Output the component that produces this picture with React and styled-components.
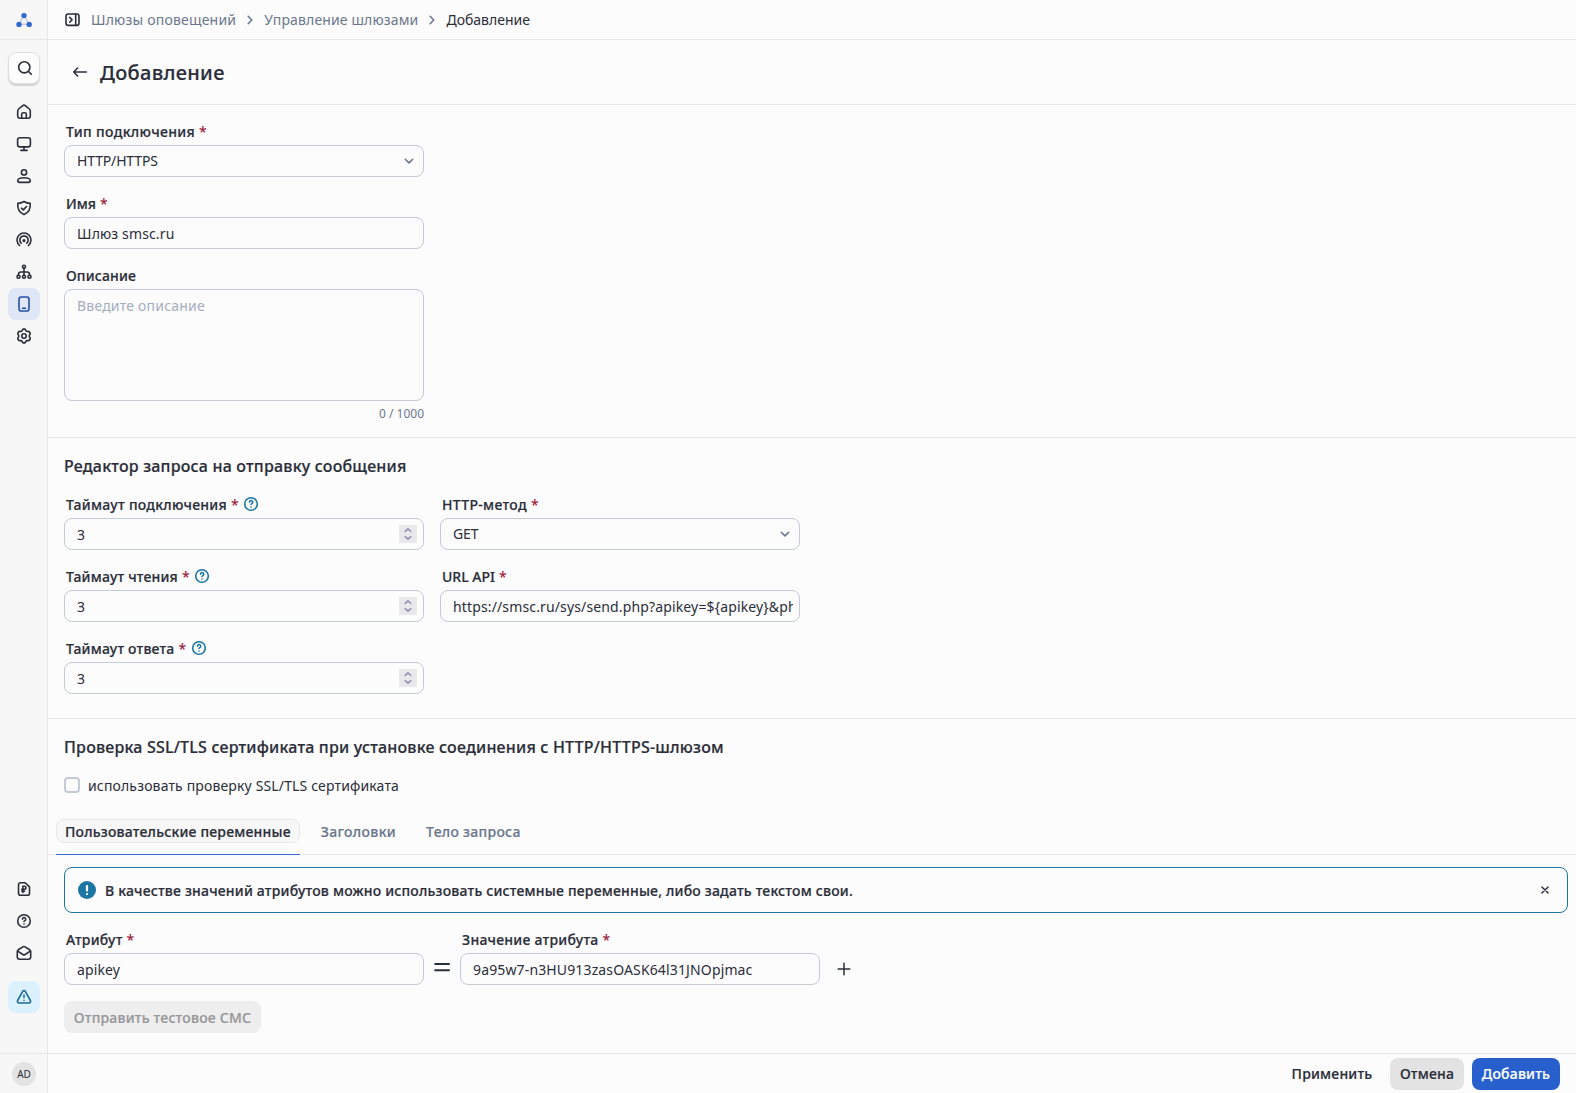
import React from "react";
import styled, { createGlobalStyle, css } from "styled-components";

const GlobalStyle = createGlobalStyle`
  * {
    box-sizing: border-box;
  }
  body {
    margin: 0;
    background: #fcfcfd;
    color: #2b2d38;
    font-family: "Noto Sans", sans-serif;
    font-size: 14px;
    line-height: 20px;
  }
  input, textarea, button {
    font: inherit;
    color: inherit;
  }
`;

const medium = css`
  font-weight: 500;
  -webkit-text-stroke: 0.2px;
`;

const Layout = styled.div`
  display: flex;
  height: 1093px;
  overflow: hidden;
`;

const Sidebar = styled.nav`
  display: flex;
  flex-direction: column;
  align-items: center;
  width: 48px;
  flex: none;
  background: #f7f7f7;
  border-right: 1px solid #e8e8ea;
`;
const LogoBox = styled.div`
  display: flex;
  align-items: center;
  justify-content: center;
  align-self: stretch;
  height: 40px;
  padding-left: 1px;
  border-bottom: 1px solid #e8e8ea;
`;
const SearchButton = styled.button`
  display: flex;
  align-items: center;
  justify-content: center;
  width: 32px;
  height: 32px;
  margin: 12px 0 12px 1px;
  padding: 0 0 0 1px;
  background: #fdfdfd;
  border: 1px solid #dededf;
  border-radius: 8px;
  box-shadow: 0 2px 1px #d4d4d4;
`;
const NavItem = styled.a`
  display: flex;
  align-items: center;
  justify-content: center;
  width: 32px;
  height: 32px;
  margin-left: 1px;
  border-radius: 8px;
  color: ${props => props.$color || "#2b2d38"};
  background: ${props => props.$bg || "transparent"};
`;
const Spacer = styled.div`
  flex: 1;
`;
const AlertSlot = styled.div`
  margin: 12px 0 40px;
`;
const UserBox = styled.div`
  display: flex;
  align-items: center;
  justify-content: center;
  align-self: stretch;
  height: 40px;
  padding-left: 1px;
  border-top: 1px solid #e8e8ea;
`;
const Avatar = styled.div`
  width: 24px;
  height: 24px;
  margin-top: 1px;
  border-radius: 50%;
  background: #e3e3e3;
  font-size: 10px;
  line-height: 25px;
  text-align: center;
`;

const Main = styled.main`
  display: flex;
  flex-direction: column;
  flex: 1;
  min-width: 0;
`;
const Breadcrumbs = styled.div`
  display: flex;
  align-items: center;
  height: 40px;
  padding-left: 16px;
  border-bottom: 1px solid #e8e8ea;
`;
const Crumb = styled.span`
  color: ${props => (props.$current ? "#2b2d38" : "#6b778c")};
  letter-spacing: ${props => props.$track || 0}px;
`;
const CrumbArrow = styled.span`
  display: flex;
  justify-content: center;
  width: 28px;
  color: #6b778c;
`;
const PanelToggle = styled.span`
  display: flex;
  width: 27px;
`;
const TitleBar = styled.header`
  display: flex;
  align-items: center;
  gap: 12px;
  height: 65px;
  padding-left: 24px;
  border-bottom: 1px solid #e8e8ea;
`;
const Title = styled.h1`
  ${medium}
  margin: 0;
  padding-top: 2px;
  font-size: 20px;
  line-height: 28px;
  letter-spacing: 0.32px;
`;

const Section = styled.section`
  padding: 16px 16px ${props => props.$bottom}px;
  border-bottom: 1px solid #e8e8ea;
`;
const Heading = styled.h2`
  ${medium}
  margin: 0 0 16px;
  font-size: 16px;
  line-height: 24px;
  letter-spacing: 0.2px;
`;
const Stack = styled.div`
  display: flex;
  flex-direction: column;
  gap: 16px;
`;
const Columns = styled.div`
  display: flex;
  align-items: flex-start;
  gap: 16px;
`;
const FieldBox = styled.div`
  width: 360px;
`;
const Label = styled.label`
  display: flex;
  align-items: center;
  height: 24px;
  padding: 0 0 2px 2px;
  line-height: 22px;
`;
const LabelText = styled.span`
  ${medium}
  letter-spacing: ${props => props.$track}px;
`;
const Star = styled.span`
  margin-left: 4px;
  color: #9d1c3b;
  font-weight: 500;
`;
const HelpSlot = styled.span`
  display: flex;
  margin: -2px 0 0 4.5px;
  color: #1b76a3;
`;
const Control = styled.div`
  display: flex;
  align-items: center;
  height: 32px;
  padding-right: 6px;
  border: 1px solid #c6cad6;
  border-radius: 8px;
`;
const Input = styled.input`
  flex: 1;
  min-width: 0;
  height: 30px;
  padding: 0;
  margin-left: 12px;
  border: 0;
  outline: 0;
  background: none;
  letter-spacing: 0.14px;
`;
const SelectValue = styled.span`
  flex: 1;
  padding-left: 12px;
  letter-spacing: -0.15px;
`;
const SelectArrow = styled.span`
  display: flex;
  color: #6b778c;
`;
const Stepper = styled.span`
  display: flex;
  align-items: center;
  justify-content: center;
  width: 18px;
  height: 18px;
  background: #e9e8ed;
  color: #9694a3;
`;
const TextArea = styled.textarea`
  display: block;
  width: 360px;
  height: 112px;
  padding: 6px 12px;
  border: 1px solid #c6cad6;
  border-radius: 8px;
  outline: 0;
  resize: none;
  background: none;
  letter-spacing: 0.2px;
  &::placeholder {
    color: #a3adbd;
  }
`;
const Counter = styled.div`
  height: 24px;
  color: #6b778c;
  font-size: 12px;
  line-height: 26px;
  text-align: right;
`;

const CheckRow = styled.label`
  display: flex;
  align-items: center;
  gap: 8px;
  height: 20px;
`;
const CheckBox = styled.span`
  width: 16px;
  height: 16px;
  border: 2px solid #c6cad6;
  border-radius: 4px;
`;
const CheckText = styled.span`
  padding-top: 2px;
  letter-spacing: 0.15px;
`;
const SslBlock = styled.section`
  padding: 16px 16px 24px;
`;
const Tabs = styled.div`
  display: flex;
  gap: 12px;
  height: 36px;
  padding-left: 8px;
  border-bottom: 1px solid #e8e8ea;
`;
const Tab = styled.div`
  ${medium}
  height: 36px;
  border-bottom: 1px solid ${props => (props.$active ? "#3568cd" : "transparent")};
  color: ${props => (props.$active ? "#2b2d38" : "#6b778c")};
`;
const TabText = styled.span`
  display: block;
  height: 24px;
  padding: 0 8px;
  border: 1px solid ${props => (props.$active ? "#e8e8ea" : "transparent")};
  border-radius: 8px;
  background: ${props => (props.$active ? "#f7f7f7" : "none")};
  line-height: 24px;
  letter-spacing: ${props => props.$track}px;
`;
const Notice = styled.div`
  display: flex;
  align-items: center;
  height: 46px;
  margin: 12px 8px 16px 16px;
  padding: 0 14px 0 13px;
  border: 1px solid #1b76a3;
  border-radius: 8px;
`;
const NoticeText = styled.span`
  ${medium}
  flex: 1;
  padding: 2px 0 0 9px;
  letter-spacing: 0.195px;
`;
const AttributeRow = styled.div`
  display: flex;
  align-items: flex-end;
  padding-left: 16px;
`;
const RowSign = styled.span`
  display: flex;
  align-items: center;
  justify-content: center;
  width: ${props => props.$width}px;
  height: 32px;
`;
const Button = styled.button`
  ${medium}
  width: ${props => props.$width}px;
  height: 32px;
  padding: ${props => props.$shift || 0}px 0 0;
  border: 0;
  border-radius: 8px;
  background: ${props => props.$bg || "transparent"};
  color: ${props => props.$color || "#2b2d38"};
  letter-spacing: 0.2px;
  white-space: nowrap;
`;
const TestRow = styled.div`
  flex: 1;
  padding: 16px 0 0 16px;
`;
const Footer = styled.footer`
  display: flex;
  justify-content: flex-end;
  gap: 8px;
  height: 40px;
  padding: 4px 16px 0 0;
  border-top: 1px solid #e8e8ea;
`;

const Icon = ({ children, size = 16, width = 1.6 }) => (
  <svg
    width={size}
    height={size}
    viewBox={`0 0 ${size} ${size}`}
    fill="none"
    stroke="currentColor"
    strokeWidth={width}
    strokeLinecap="round"
    strokeLinejoin="round"
  >
    {children}
  </svg>
);

const HelpIcon = () => (
  <Icon>
    <circle cx="8" cy="8" r="6.3" />
    <path d="M6.5 6.1a1.6 1.6 0 1 1 2.3 1.500c-.5.25-.8.5-.8.9" />
    <path d="M8 11v.1" />
  </Icon>
);

const Logo = () => (
  <svg width="16" height="16" viewBox="0 0 16 16">
    <path d="M8 3 3 12.2h10z" fill="none" stroke="#9db5ea" strokeWidth="1" />
    <circle cx="8" cy="3.6" r="2.7" fill="#3568cd" />
    <circle cx="3" cy="12.4" r="2.7" fill="#3568cd" />
    <circle cx="13.2" cy="12.4" r="2.7" fill="#3568cd" />
  </svg>
);

const topIcons = [
  <>
    <path d="M1.7 6.9c0-.8.3-1.4.9-1.9l4.1-3.400a2 2 0 0 1 2.600 0L13.400 5c.6.5.9 1.100.9 1.900v5.200a2.200 2.200 0 0 1-2.200 2.200H3.900a2.200 2.200 0 0 1-2.200-2.200z" />
    <path d="M5.700 14.200v-4a1.400 1.400 0 0 1 1.400-1.400h1.800a1.400 1.400 0 0 1 1.400 1.400v4" />
  </>,
  <>
    <rect x="1.6" y="1.7" width="12.8" height="9.2" rx="2.2" />
    <path d="M8 11v3.3M4.900 14.400h6.200" />
  </>,
  <>
    <circle cx="8" cy="4.4" r="2.6" />
    <path d="M8 9.800c-3.600 0-6.300 1.100-6.300 3 0 1 .8 1.600 1.800 1.600h9c1 0 1.800-.6 1.800-1.600 0-1.900-2.700-3-6.300-3z" />
  </>,
  <>
    <path d="M8 1.500c1.800 1.200 3.800 1.800 6.200 1.900.5 5.100-1.300 9.200-6.200 11.200-4.900-2-6.700-6.100-6.200-11.200C4.200 3.300 6.200 2.700 8 1.500z" />
    <path d="m5.500 8.200 1.800 1.700 3.200-3.400" />
  </>,
  <>
    <path d="M3.600 13.500a7 7 0 1 1 8.800 0" />
    <path d="M5.200 11.200a4.200 4.200 0 1 1 5.600 0" />
    <circle cx="8" cy="8.600" r=".8" fill="currentColor" />
  </>,
  <>
    <circle cx="8" cy="2.800" r="1.500" />
    <circle cx="2.500" cy="12.800" r="1.500" />
    <circle cx="8" cy="12.800" r="1.500" />
    <circle cx="13.500" cy="12.800" r="1.500" />
    <path d="M8 4.400v6.800M2.500 11.200v-.8C2.500 9 3.400 8 4.800 8h6.400c1.400 0 2.300 1 2.300 2.400v.8" />
  </>,
  <>
    <rect x="3" y="1" width="10" height="14" rx="2.300" />
    <path d="M6.500 12.200h3" />
  </>,
  <>
    <path d="M6.600 1.600a1 1 0 0 1 .8-.5h1.200a1 1 0 0 1 .8.5l.6 1.300 1 .6 1.500-.1a1 1 0 0 1 .9.400l.7 1.200a1 1 0 0 1 0 1l-.8 1.300v1.400l.8 1.300a1 1 0 0 1 0 1l-.7 1.200a1 1 0 0 1-.9.400l-1.500-.1-1 .6-.6 1.300a1 1 0 0 1-.8.500H7.400a1 1 0 0 1-.8-.5L6 13.100l-1-.6-1.500.1a1 1 0 0 1-.9-.4L1.900 11a1 1 0 0 1 0-1l.8-1.300V7.300L1.900 6a1 1 0 0 1 0-1l.7-1.200a1 1 0 0 1 .9-.4l1.500.1 1-.6z" />
    <circle cx="8" cy="8" r="2.200" />
  </>
];

const Field = ({ label, required, help, track = 0.15, children }) => (
  <FieldBox>
    <Label>
      <LabelText $track={track}>{label}</LabelText>
      {required && <Star>*</Star>}
      {help && (
        <HelpSlot>
          <HelpIcon />
        </HelpSlot>
      )}
    </Label>
    {children}
  </FieldBox>
);

const TextField = ({ label, value, track }) => (
  <Field label={label} track={track} required>
    <Control>
      <Input defaultValue={value} />
    </Control>
  </Field>
);

const NumberField = ({ label, value, track }) => (
  <Field label={label} track={track} required help>
    <Control>
      <Input defaultValue={value} />
      <Stepper>
        <Icon size={18}>
          <path d="m6.200 6.300 2.800-2.500 2.800 2.500M6.200 11.700l2.800 2.500 2.800-2.500" />
        </Icon>
      </Stepper>
    </Control>
  </Field>
);

const SelectField = ({ label, value, track }) => (
  <Field label={label} track={track} required>
    <Control>
      <SelectValue>{value}</SelectValue>
      <SelectArrow>
        <Icon>
          <path d="m4.300 6.300 3.700 3.600 3.700-3.600" />
        </Icon>
      </SelectArrow>
    </Control>
  </Field>
);

const Separator = () => (
  <CrumbArrow>
    <Icon>
      <path d="m6.200 4.300 3.600 3.700-3.600 3.700" />
    </Icon>
  </CrumbArrow>
);

const SideMenu = () => (
  <Sidebar>
    <LogoBox>
      <Logo />
    </LogoBox>
    <SearchButton>
      <Icon>
        <circle cx="7.300" cy="7.300" r="5.600" />
        <path d="m11.500 11.500 2.800 2.800" />
      </Icon>
    </SearchButton>
    {topIcons.map((icon, i) => (
      <NavItem
        key={i}
        $bg={i === 6 ? "#dfe6f6" : undefined}
        $color={i === 6 ? "#264fa8" : undefined}
      >
        <Icon>{icon}</Icon>
      </NavItem>
    ))}
    <Spacer />
    <NavItem>
      <Icon>
        <path d="M4.500 1.700h4.700l4.300 4.200v6.400a2 2 0 0 1-2 2h-7a2 2 0 0 1-2-2V3.700a2 2 0 0 1 2-2z" />
        <path d="M6.900 11.400V5.200h1.500a1.600 1.600 0 0 1 0 3.200H5.800M5.800 10.200h2.700" />
      </Icon>
    </NavItem>
    <NavItem>
      <HelpIcon />
    </NavItem>
    <NavItem>
      <Icon>
        <path d="M1.300 6.600c0-.8.400-1.400 1-1.800L6.900 1.900a2 2 0 0 1 2.200 0l4.600 2.900c.6.400 1 1 1 1.800v5.500a2.200 2.200 0 0 1-2.200 2.200h-9a2.200 2.200 0 0 1-2.200-2.200z" />
        <path d="m1.800 6.200 5 3.300a2.200 2.200 0 0 0 2.400 0l5-3.300" />
      </Icon>
    </NavItem>
    <AlertSlot>
      <NavItem $bg="#dbf1fd" $color="#1b6c96">
        <Icon>
          <path d="M6.700 2.400a1.500 1.500 0 0 1 2.600 0l5.100 9.100a1.700 1.700 0 0 1-1.500 2.500H3.100a1.700 1.700 0 0 1-1.500-2.500z" />
          <path d="M8 6v2.600M8 11.200v.1" />
        </Icon>
      </NavItem>
    </AlertSlot>
    <UserBox>
      <Avatar>AD</Avatar>
    </UserBox>
  </Sidebar>
);

const App = () => (
  <Layout>
    <GlobalStyle />
    <SideMenu />
    <Main>
      <Breadcrumbs>
        <PanelToggle>
          <Icon>
            <rect x="2" y="2" width="13" height="11.400" rx="2.200" />
            <path d="M11.700 2.200v11M5.700 5.400l2.400 2.400-2.400 2.400" />
          </Icon>
        </PanelToggle>
        <Crumb $track={0.2}>Шлюзы оповещений</Crumb>
        <Separator />
        <Crumb $track={0.14}>Управление шлюзами</Crumb>
        <Separator />
        <Crumb $current>Добавление</Crumb>
      </Breadcrumbs>
      <TitleBar>
        <Icon width={1.5}>
          <path d="M14.300 8H1.700M5.600 4 1.700 8l3.900 4" />
        </Icon>
        <Title>Добавление</Title>
      </TitleBar>
      <Section $bottom={12}>
        <Stack>
          <SelectField label="Тип подключения" value="HTTP/HTTPS" track={0.35} />
          <TextField label="Имя" value="Шлюз smsc.ru" track={0} />
          <Field label="Описание">
            <TextArea placeholder="Введите описание" />
            <Counter>0 / 1000</Counter>
          </Field>
        </Stack>
      </Section>
      <Section $bottom={24}>
        <Heading>Редактор запроса на отправку сообщения</Heading>
        <Columns>
          <Stack>
            <NumberField label="Таймаут подключения" value="3" track={0.27} />
            <NumberField label="Таймаут чтения" value="3" track={0.18} />
            <NumberField label="Таймаут ответа" value="3" track={0.17} />
          </Stack>
          <Stack>
            <SelectField label="HTTP-метод" value="GET" track={0.32} />
            <TextField
              label="URL API"
              value="https://smsc.ru/sys/send.php?apikey=${apikey}&phones=${phone}&mes=${message}"
              track={0}
            />
          </Stack>
        </Columns>
      </Section>
      <SslBlock>
        <Heading>
          Проверка SSL/TLS сертификата при установке соединения с HTTP/HTTPS-шлюзом
        </Heading>
        <CheckRow>
          <CheckBox />
          <CheckText>использовать проверку SSL/TLS сертификата</CheckText>
        </CheckRow>
      </SslBlock>
      <Tabs>
        <Tab $active>
          <TabText $active $track={0.2}>
            Пользовательские переменные
          </TabText>
        </Tab>
        <Tab>
          <TabText $track={0.35}>Заголовки</TabText>
        </Tab>
        <Tab>
          <TabText $track={0.28}>Тело запроса</TabText>
        </Tab>
      </Tabs>
      <Notice>
        <svg width="18" height="18" viewBox="0 0 18 18">
          <circle cx="9" cy="9" r="9" fill="#1b76a3" />
          <path
            d="M9 5v4.600M9 13v.1"
            stroke="#fff"
            strokeWidth="2.200"
            strokeLinecap="round"
          />
        </svg>
        <NoticeText>
          В качестве значений атрибутов можно использовать системные переменные, либо
          задать текстом свои.
        </NoticeText>
        <Icon width={1.4}>
          <path d="m4.900 4.900 6.200 6.200M11.100 4.900l-6.200 6.200" />
        </Icon>
      </Notice>
      <AttributeRow>
        <TextField label="Атрибут" value="apikey" track={0.22} />
        <RowSign $width={36}>
          <Icon width={2}>
            <path d="M1.200 3h13.800M1.200 9.200h13.800" />
          </Icon>
        </RowSign>
        <TextField
          label="Значение атрибута"
          value="9a95w7-n3HU913zasOASK64l31JNOpjmac"
          track={0.24}
        />
        <RowSign $width={48}>
          <Icon width={1.5}>
            <path d="M8 2.200v11.600M2.200 8h11.600" />
          </Icon>
        </RowSign>
      </AttributeRow>
      <TestRow>
        <Button $width={197} $shift={2} $bg="#eeeeee" $color="#96979a">
          Отправить тестовое СМС
        </Button>
      </TestRow>
      <Footer>
        <Button $width={100}>Применить</Button>
        <Button $width={74} $bg="#e3e3e3">
          Отмена
        </Button>
        <Button $width={88} $bg="#275fcc" $color="#ffffff">
          Добавить
        </Button>
      </Footer>
    </Main>
  </Layout>
);

export default App;
